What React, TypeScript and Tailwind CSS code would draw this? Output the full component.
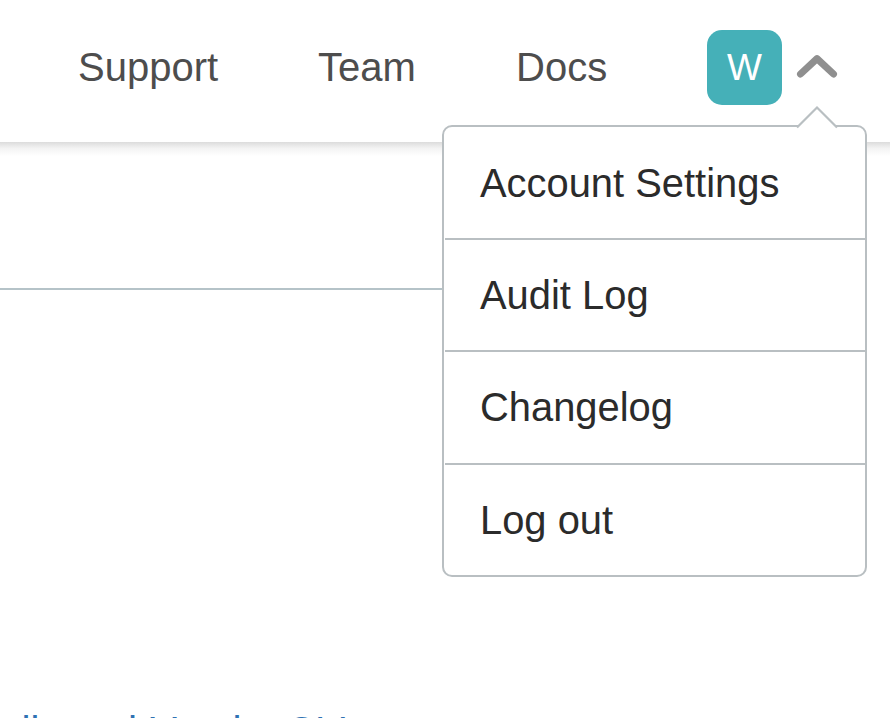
const menu = [
  { label: 'Account Settings', row: 'h-[113px] pt-px' },
  { label: 'Audit Log', row: 'h-[112px]' },
  { label: 'Changelog', row: 'h-[113px]' },
  { label: 'Log out', row: 'h-[110px]' },
];

function Dropdown() {
  return (
    <div className="absolute left-[442px] top-[125px] z-10 h-[452px] w-[425px] rounded-[10px] border-2 border-[#b9bfc2] bg-white">
      <svg className="absolute left-[351px] top-[-24px] h-[27px] w-[44px]" viewBox="0 0 44 27" fill="none">
        <path d="M2 25 22 5l20 20v1H2Z" fill="#fff" />
        <path d="M2 24.5 22 4.5l20 20" stroke="#b9bfc2" strokeWidth="2.2" />
      </svg>
      <ul className="flex flex-col pl-px">
        {menu.map((item, i) => (
          <li
            key={item.label}
            className={`${item.row} pl-[35px] ${i < menu.length - 1 ? 'border-b-2 border-[#b9bfc2]' : ''}`}
          >
            <a className="block whitespace-nowrap text-[39.9px] leading-[110px] text-[#2b2b2b]">{item.label}</a>
          </li>
        ))}
      </ul>
    </div>
  );
}

export default function App() {
  return (
    <div className="relative h-[718px] w-[890px] overflow-hidden bg-white font-['Liberation_Sans',Arial,sans-serif]">
      <header className="flex h-[142px] bg-white pl-[78px] pt-[30px]">
        <nav className="flex text-[40px] leading-[75px] text-[#4d4d4d]">
          <a className="w-[240px]">Support</a>
          <a className="w-[198px]">Team</a>
          <a className="w-[191px]">Docs</a>
        </nav>
        <div className="flex h-[75px] w-[75px] items-center justify-center rounded-[15px] bg-[#45b0b8] text-[37px] text-white">
          W
        </div>
        <svg className="ml-[14px] mt-[22px] h-[28px] w-[42px]" viewBox="0 0 42 28" fill="none">
          <path d="M4.5 22 21 6.6 37.5 22" stroke="#8f8f8f" strokeWidth="7" strokeLinecap="round" strokeLinejoin="round" />
        </svg>
      </header>
      <main>
        <div className="h-[14px] bg-linear-to-b from-[#dcdcdc] via-[#f3f3f3] via-45% to-white" />
        <div className="h-[134px] w-[860px] border-b-2 border-[#b5c3c8]" />
        <h2 className="-ml-[43px] mt-[416px] whitespace-nowrap text-[40px] leading-[50px] text-[#2f72b3]">
          Dedicated <span className="ml-[2px] mr-[-2px]">Vendor</span> CLI
        </h2>
      </main>
      <Dropdown />
    </div>
  );
}
